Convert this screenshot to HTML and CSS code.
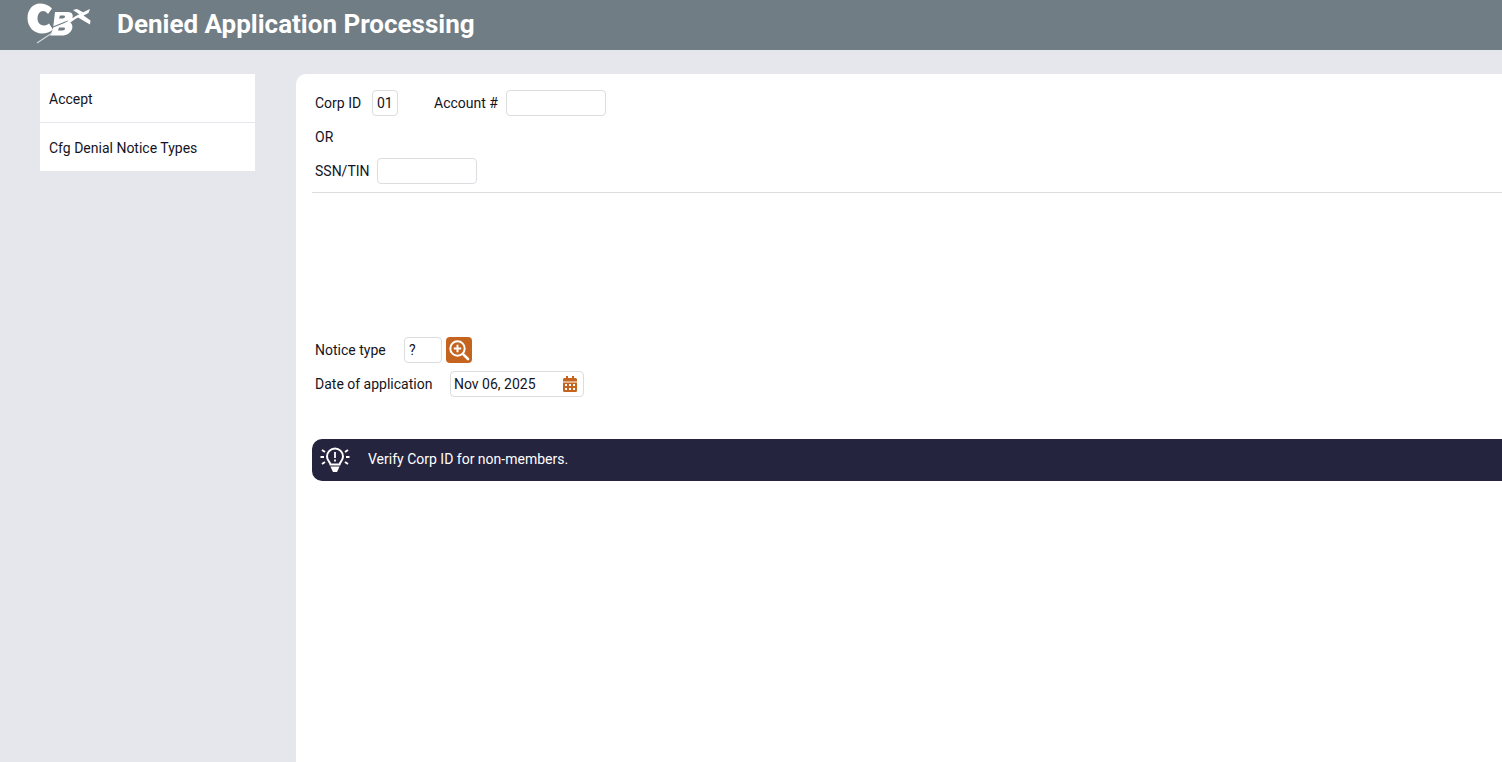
FILE: index.html
```html
<!DOCTYPE html>
<html lang="en">
<head>
    <meta charset="UTF-8">
    <meta name="viewport" content="width=device-width, initial-scale=1.0">
    <title>Denied Application Processing</title>
    <link rel="stylesheet" href="styles.css">
</head>
<body>

    <header class="top-bar">
        <svg class="logo" width="70" height="46" viewBox="0 0 70 46" aria-label="CBX logo">
            <path d="M28 8.5 C25 5 20 3.5 16 3.5 C8.5 3.5 3.5 10 3.5 18 C3.5 27 10 33.5 18 33.5 C22.5 33.5 26 32 29 29.5 L25 23.5 C23 25 21.5 25.5 20 25.5 C16 25.5 13.5 22.5 13.5 18.5 C13.5 14 16 11 19 11 C21 11 22.5 12 24 14 Z" fill="#fff"/>
            <path d="M31 12 H44 C48 12 49.5 15 48.5 17.5 C48 19.5 46.5 21 45 22 C48 23 49 26 48 29 C46.5 33 43 35.5 38 35.5 H26 L29 29 Z M36 15.5 L35 18.5 H38.5 C40 18.5 41 17.5 41 16.5 C41 15.8 40.2 15.5 39.5 15.5 Z M35 27.5 L34 30.5 H38.5 C40 30.5 41 29.5 41 28.5 C41 27.8 40.2 27.5 39.5 27.5 Z" fill="#fff" fill-rule="evenodd"/>
            <path d="M29 27 L44 21" stroke="#707d84" stroke-width="1.2" fill="none"/>
            <path d="M39 24.5 C46 19 55 14 66 9 L64.5 13 L59.5 15.5 L66.5 20.5 L66 24.5 L54 17.5 C50 19.5 46 22.5 42 26.5 Z" fill="#fff"/>
            <path d="M49 10 L53 9 L59.5 12.5 L55.5 14.5 Z" fill="#fff"/>
            <path d="M13 43 L28 33" stroke="#d5dadc" stroke-width="1.2"/>
        </svg>
        <h1>Denied Application Processing</h1>
    </header>

    <div class="page">
        <nav class="side-menu">
            <a href="#">Accept</a>
            <a href="#">Cfg Denial Notice Types</a>
        </nav>

        <main class="content">
            <div class="form-row">
                <label class="label-corp">Corp ID</label>
                <input class="field field-corp" type="text" value="01">
                <label class="label-account">Account #</label>
                <input class="field field-wide" type="text">
            </div>
            <p class="or-text">OR</p>
            <div class="form-row">
                <label class="label-ssn">SSN/TIN</label>
                <input class="field field-wide" type="text">
            </div>

            <hr class="divider">

            <div class="form-row notice-row">
                <label class="label-notice">Notice type</label>
                <input class="field field-notice" type="text" value="?">
                <button class="lookup-button" aria-label="Look up">
                    <svg width="22" height="22" viewBox="0 0 22 22" fill="none" stroke="#fff">
                        <circle cx="9.5" cy="9.5" r="7.2" stroke-width="2"/>
                        <path d="M9.5 5.8 V13.2 M5.8 9.5 H13.2" stroke-width="2"/>
                        <path d="M14.8 14.8 L20 20" stroke-width="2.6" stroke-linecap="round"/>
                    </svg>
                </button>
            </div>
            <div class="form-row date-row">
                <label class="label-date">Date of application</label>
                <div class="date-field">
                    <span>Nov 06, 2025</span>
                    <svg width="14" height="16" viewBox="0 0 14 16" fill="#c4641f">
                        <path d="M3 0 H5 V2 H9 V0 H11 V2 H12.5 A1.5 1.5 0 0 1 14 3.5 V5.5 H0 V3.5 A1.5 1.5 0 0 1 1.5 2 H3 Z"/>
                        <path fill-rule="evenodd" d="M0 6.5 H14 V14.5 A1.5 1.5 0 0 1 12.5 16 H1.5 A1.5 1.5 0 0 1 0 14.5 Z M2 8 V10 H4 V8 Z M6 8 V10 H8 V8 Z M10 8 V10 H12 V8 Z M2 12 V14 H4 V12 Z M6 12 V14 H8 V12 Z M10 12 V14 H12 V12 Z"/>
                    </svg>
                </div>
            </div>

            <div class="hint-bar">
                <svg width="30" height="26" viewBox="0 0 30 26" fill="none" stroke="#fff" stroke-width="2">
                    <path d="M10.5 17.5 C10 14.5 7 13.5 7 9.5 A8 8 0 0 1 23 9.5 C23 13.5 20 14.5 19.5 17.5 Z"/>
                    <path d="M15 5 V11 M15 12.5 V14.5" stroke-width="1.8"/>
                    <path d="M10.5 19.5 H19.5 L18.5 22 L17 25 H13 L11.5 22 Z" fill="#fff" stroke="none"/>
                    <path d="M0.5 10 H4 M26 10 H29.5 M2 3 L5 5 M28 3 L25 5 M2 17 L5 15 M28 17 L25 15"/>
                </svg>
                <span>Verify Corp ID for non-members.</span>
            </div>
        </main>
    </div>

</body>
</html>
```

FILE: styles.css
```css
* {
    padding: 0;
    margin: 0;
    box-sizing: border-box;
}

html, body {
    height: 100%;
}

body {
    display: flex;
    flex-direction: column;
    overflow: hidden;
    background-color: #e6e7ec;
    font-family: Roboto, Arial, sans-serif;
    font-size: 14px;
    color: #14141e;
}

.top-bar {
    display: flex;
    align-items: center;
    flex-shrink: 0;
    height: 50px;
    padding-bottom: 2px;
    background-color: #707d84;
}

.logo {
    flex-shrink: 0;
    margin: 0 0 0 24px;
    align-self: flex-start;
}

.top-bar h1 {
    margin-left: 23px;
    font-size: 26px;
    font-weight: 700;
    color: #fff;
}

.page {
    display: flex;
    flex: 1;
    align-items: flex-start;
    padding: 24px 0 0 40px;
}

.side-menu {
    display: flex;
    flex-direction: column;
    flex-shrink: 0;
    width: 215px;
    background-color: #fff;
}

.side-menu a {
    display: flex;
    align-items: center;
    height: 49px;
    padding: 2px 0 0 9px;
    color: #14141e;
    text-decoration: none;
}

.side-menu a:first-child {
    border-bottom: 1px solid #e6e7ec;
}

.side-menu a:last-child {
    height: 48px;
}

.content {
    flex: 1;
    align-self: stretch;
    margin-left: 41px;
    padding: 16px 0 0 16px;
    background-color: #fff;
    border-radius: 10px 0 0 0;
}

.form-row {
    display: flex;
    align-items: center;
    height: 26px;
    padding-left: 3px;
}

.field {
    height: 26px;
    padding: 0 4px;
    border: 1px solid #dcdde0;
    border-radius: 4px;
    outline: none;
    background: #fff;
    font: inherit;
    color: inherit;
}

.label-corp { width: 57px; }
.field-corp { width: 26px; }
.label-account { margin-left: 36px; width: 72px; }
.field-wide { width: 100px; }
.label-ssn { width: 62px; }
.label-notice { width: 89px; }
.field-notice { width: 38px; }
.label-date { width: 135px; }

.or-text {
    height: 42px;
    padding-left: 3px;
    line-height: 42px;
}

.divider {
    height: 1px;
    margin-top: 8px;
    border: none;
    background-color: #dcdde0;
}

.notice-row {
    margin-top: 144px;
}

.lookup-button {
    display: flex;
    align-items: center;
    justify-content: center;
    width: 26px;
    height: 26px;
    margin-left: 4px;
    border: none;
    border-radius: 4px;
    background-color: #c4641f;
}

.date-row {
    margin-top: 8px;
}

.date-field {
    display: flex;
    align-items: center;
    justify-content: space-between;
    width: 134px;
    height: 26px;
    padding: 0 6px 0 3px;
    border: 1px solid #dcdde0;
    border-radius: 4px;
}

.hint-bar {
    display: flex;
    align-items: center;
    gap: 18px;
    height: 42px;
    margin-top: 42px;
    padding-left: 8px;
    background-color: #25243f;
    border-radius: 10px 0 0 10px;
    color: #fff;
}

.hint-bar span {
    margin-bottom: 2px;
}
```
